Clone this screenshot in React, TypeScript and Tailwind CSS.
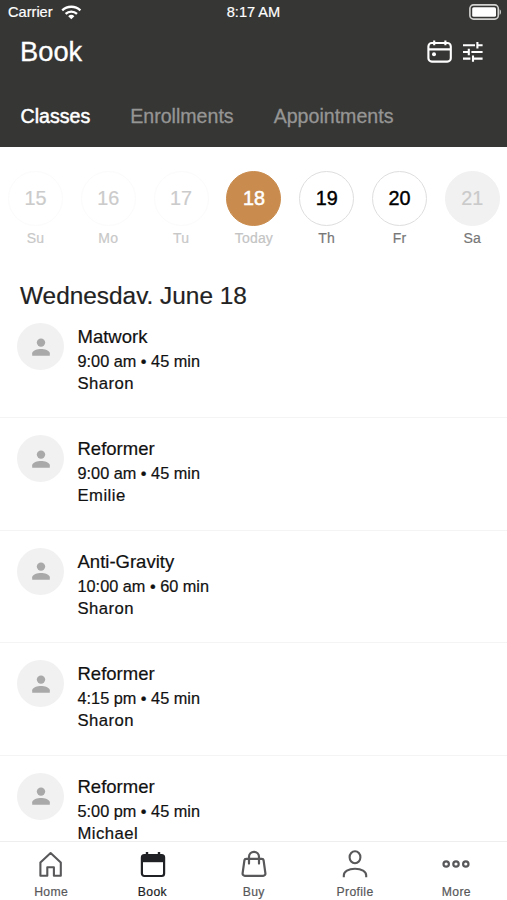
import type { ReactNode } from "react";
import clsx from "clsx";

type DayState = "past" | "today" | "open" | "closed";
type NavId = "home" | "book" | "buy" | "profile" | "more";

interface Day {
  date: number;
  label: string;
  state: DayState;
}

interface ClassItem {
  name: string;
  time: string;
  teacher: string;
}

const TABS = ["Classes", "Enrollments", "Appointments"];

const DAYS: Day[] = [
  { date: 15, label: "Su", state: "past" },
  { date: 16, label: "Mo", state: "past" },
  { date: 17, label: "Tu", state: "past" },
  { date: 18, label: "Today", state: "today" },
  { date: 19, label: "Th", state: "open" },
  { date: 20, label: "Fr", state: "open" },
  { date: 21, label: "Sa", state: "closed" },
];

const DAY_CLASS: Record<DayState, { circle: string; label: string }> = {
  past: {
    circle: "border-[#fbfbfb] text-[#cbcbcb] [-webkit-text-stroke:0.2px]",
    label: "text-[#c8c8c8]",
  },
  today: {
    circle: "border-[#c98c4e] bg-[#c98c4e] text-white [-webkit-text-stroke:0.5px]",
    label: "text-[#c4c4c4]",
  },
  open: {
    circle: "border-[#dedede] text-black [-webkit-text-stroke:0.4px]",
    label: "text-[#777]",
  },
  closed: {
    circle: "border-[#f1f1f1] bg-[#f1f1f1] text-[#cacaca] [-webkit-text-stroke:0.2px]",
    label: "text-[#777]",
  },
};

const CLASSES: ClassItem[] = [
  { name: "Matwork", time: "9:00 am • 45 min", teacher: "Sharon" },
  { name: "Reformer", time: "9:00 am • 45 min", teacher: "Emilie" },
  { name: "Anti-Gravity", time: "10:00 am • 60 min", teacher: "Sharon" },
  { name: "Reformer", time: "4:15 pm • 45 min", teacher: "Sharon" },
  { name: "Reformer", time: "5:00 pm • 45 min", teacher: "Michael" },
];

const NAV: { id: NavId; label: string }[] = [
  { id: "home", label: "Home" },
  { id: "book", label: "Book" },
  { id: "buy", label: "Buy" },
  { id: "profile", label: "Profile" },
  { id: "more", label: "More" },
];

export default function App() {
  return (
    <div className="flex h-[900px] w-[507px] flex-col overflow-hidden bg-white font-['Liberation_Sans',Arial,sans-serif]">
      <header className="flex h-[147px] shrink-0 flex-col bg-[#363634] text-white">
        <StatusBar />
        <div className="flex h-[56px] items-center justify-between pl-5 pr-[23px]">
          <h1 className="text-[27.3px] leading-none [-webkit-text-stroke:0.3px]">Book</h1>
          <div className="flex items-center gap-[8px]">
            <CalendarIcon />
            <TuneIcon />
          </div>
        </div>
        <Tabs />
      </header>
      <DayStrip />
      <main className="flex min-h-0 flex-1 flex-col overflow-hidden">
        <h2 className="mt-[26px] h-[24px] shrink-0 pl-5 text-[24.4px] leading-[28px] text-[#222] [-webkit-text-stroke:0.2px]">
          Wednesdav. June 18
        </h2>
        {CLASSES.map((item, i) => (
          <ClassRow key={i} item={item} />
        ))}
      </main>
      <BottomNav active="book" />
    </div>
  );
}

function StatusBar() {
  return (
    <div className="grid h-6 grid-cols-3 items-center px-[5px] text-[14.6px] leading-none [-webkit-text-stroke:0.2px]">
      <div className="flex items-center gap-[8px] pl-[3px]">
        <span>Carrier</span>
        <svg width="21" height="16" viewBox="0 0 21 16" fill="none" stroke="#fff" strokeWidth="2.3">
          <path d="M1.2 6.4a13.2 13.2 0 0 1 18.2 0" />
          <path d="M4.6 9.9a8.3 8.3 0 0 1 11.4 0" />
          <path d="M10.3 15.2 7.2 12.3a4.5 4.5 0 0 1 6.2 0Z" fill="#fff" stroke="none" />
        </svg>
      </div>
      <span className="text-center">8:17 AM</span>
      <svg className="justify-self-end" width="33" height="16" viewBox="0 0 33 16" fill="none">
        <rect x="0.9" y="0.9" width="28.4" height="14.2" rx="3.6" stroke="#d2d2d0" strokeWidth="1.6" />
        <rect x="3.2" y="3.2" width="23.8" height="9.6" rx="1.6" fill="#fff" />
        <path d="M30.6 5.2c1.8.8 1.8 4.8 0 5.6Z" fill="#d2d2d0" />
      </svg>
    </div>
  );
}

function Tabs() {
  return (
    <nav className="flex h-[67px] items-center gap-10 pl-[20.5px] pt-[6px]">
      {TABS.map((tab, i) => (
        <span
          key={tab}
          className={clsx(
            "text-[19.6px] leading-none",
            i === 0
              ? "text-white [-webkit-text-stroke:0.5px]"
              : "text-[#959594] [-webkit-text-stroke:0.3px]",
          )}
        >
          {tab}
        </span>
      ))}
    </nav>
  );
}

function DayStrip() {
  return (
    <div className="flex h-[109px] shrink-0 gap-[17.8px] pl-2 pt-[23.5px]">
      {DAYS.map((day) => (
        <div key={day.date} className="flex w-[55px] shrink-0 flex-col items-center">
          <div
            className={clsx(
              "flex h-[55px] w-[55px] shrink-0 items-center justify-center rounded-full border pt-px text-[19.8px] leading-none",
              DAY_CLASS[day.state].circle,
            )}
          >
            {day.date}
          </div>
          <span
            className={clsx(
              "mt-[4.5px] text-[14px] leading-[17px] tracking-[0.2px] [-webkit-text-stroke:0.2px]",
              DAY_CLASS[day.state].label,
            )}
          >
            {day.label}
          </span>
        </div>
      ))}
    </div>
  );
}

function ClassRow({ item }: { item: ClassItem }) {
  return (
    <article className="flex h-[112.4px] shrink-0 gap-[13.5px] border-b border-[#f4f4f4] pl-[17px] pt-[17px]">
      <div className="flex h-[47px] w-[47px] shrink-0 items-center justify-center rounded-full bg-[#f1f1f1]">
        <svg width="18" height="18" viewBox="0 0 18 18" fill="#a9a9a9">
          <circle cx="9" cy="4.6" r="4.2" />
          <path d="M0.2 17.7v-2.4C.2 12.4 5.6 11 9 11s8.8 1.4 8.8 4.3v2.4Z" />
        </svg>
      </div>
      <div className="flex flex-col text-[#111] [-webkit-text-stroke:0.2px]">
        <h3 className="mt-[2px] text-[18.5px] leading-6">{item.name}</h3>
        <p className="text-[16.3px] leading-6">{item.time}</p>
        <p className="mt-[3px] text-[16.7px] leading-[15px] tracking-[0.45px]">{item.teacher}</p>
      </div>
    </article>
  );
}

function BottomNav({ active }: { active: NavId }) {
  return (
    <nav className="flex h-[59px] shrink-0 border-t border-[#eee] bg-white pl-[0.5px]">
      {NAV.map(({ id, label }) => (
        <div
          key={id}
          className={clsx(
            "flex flex-1 flex-col items-center pt-[7px]",
            id === active ? "text-[#202124]" : "text-[#58585a]",
          )}
        >
          {NAV_ICONS[id]}
          <span className="mt-[5px] text-[12.2px] leading-4 tracking-[0.35px] [-webkit-text-stroke:0.2px]">
            {label}
          </span>
        </div>
      ))}
    </nav>
  );
}

const NAV_ICONS: Record<NavId, ReactNode> = {
  home: (
    <svg width="30" height="30" viewBox="0 0 30 30" fill="none" stroke="currentColor" strokeWidth="2.1" strokeLinejoin="round">
      <path d="M14.6 4 4.4 13.4v13.4h6.9v-8.6h6.6v8.6h6.9V13.4Z" />
    </svg>
  ),
  book: (
    <svg width="30" height="30" viewBox="0 0 30 30" fill="none" stroke="currentColor" strokeWidth="2.2">
      <rect x="4.9" y="6" width="22.2" height="21" rx="2.4" />
      <path d="M4.9 6h22.2v7.2H4.9Z" fill="currentColor" stroke="none" />
      <path d="M10 3v5M22 3v5" strokeWidth="2.4" />
    </svg>
  ),
  buy: (
    <svg width="30" height="30" viewBox="0 0 30 30" fill="none" stroke="currentColor" strokeWidth="2.2" strokeLinejoin="round" strokeLinecap="round">
      <path d="M7.2 9.8h15.6a1.8 1.8 0 0 1 1.8 1.5l1.8 13.1a2.2 2.2 0 0 1-2.2 2.4H5.8a2.2 2.2 0 0 1-2.2-2.4l1.8-13.1a1.8 1.8 0 0 1 1.8-1.5Z" />
      <path d="M10 14.6V7.8a5 5 0 0 1 10 0v6.8" />
    </svg>
  ),
  profile: (
    <svg width="30" height="30" viewBox="0 0 30 30" fill="none" stroke="currentColor" strokeWidth="2.1">
      <ellipse cx="15" cy="8.2" rx="5.4" ry="6" />
      <path d="M3.8 28.2v-1.6c0-4 4.5-6.9 11.2-6.9s11.2 2.9 11.2 6.9v1.6" />
    </svg>
  ),
  more: (
    <svg width="30" height="30" viewBox="0 0 30 30" fill="none" stroke="currentColor" strokeWidth="2.2">
      <circle cx="5.2" cy="15" r="2.7" />
      <circle cx="15" cy="15" r="2.7" />
      <circle cx="24.8" cy="15" r="2.7" />
    </svg>
  ),
};

function CalendarIcon() {
  return (
    <svg width="28" height="26" viewBox="0 0 28 26" fill="none" stroke="#fff" strokeWidth="2.1">
      <rect x="2.4" y="4" width="22.4" height="18.6" rx="3.4" />
      <path d="M2.4 10.4h22.4M8.2 1.4v4.8M19.4 1.4v4.8" />
      <circle cx="8" cy="15.2" r="2" fill="#fff" stroke="none" />
    </svg>
  );
}

function TuneIcon() {
  return (
    <svg width="22" height="22" viewBox="0 0 22 22" fill="none" stroke="#fff" strokeWidth="2.1">
      <path d="M1 4.2h12M15.4 4.2h5.2M15.4 1v6.4" />
      <path d="M1 11h5M6.8 7.8v6.4M9.4 11h11.2" />
      <path d="M1 17.6h7.4M11 14.4v6.4M11 17.6h9.6" />
    </svg>
  );
}
